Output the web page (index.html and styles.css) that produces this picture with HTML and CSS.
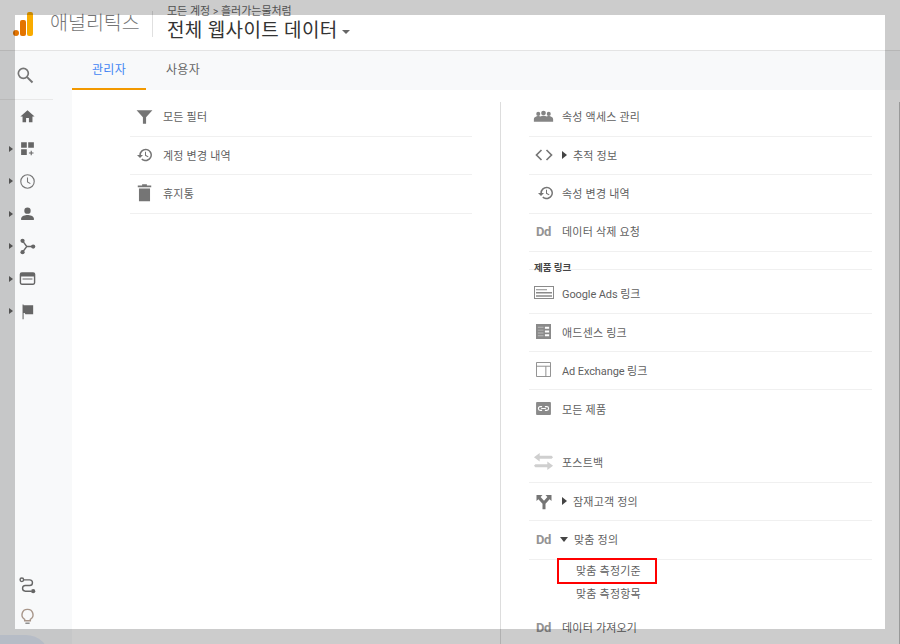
FILE: index.html
```html
<!DOCTYPE html>
<html lang="ko">
<head>
<meta charset="utf-8">
<title>애널리틱스 관리자</title>
<link rel="stylesheet" href="styles.css">
</head>
<body>
<div class="app">
  <header class="topbar">
    <svg class="logo" viewBox="0 0 24 26" width="24" height="26"><rect x="16" y="1" width="6" height="24" rx="2" fill="#f9ab00"/><rect x="9" y="9" width="6" height="16" rx="2" fill="#e37400"/><circle cx="5" cy="22" r="3" fill="#e37400"/></svg>
    <div class="brand">애널리틱스</div>
    <div class="account">
      <div class="crumb">모든 계정 <span class="chev">&gt;</span> 흘러가는물처럼</div>
      <div class="view">전체 웹사이트 데이터<span class="caret"></span></div>
    </div>
  </header>
  <div class="body">
    <nav class="sidebar">
      <div class="searchbox">
        <svg viewBox="0 0 24 24" width="20" height="20"><circle cx="10" cy="10" r="6" fill="none" stroke="#757575" stroke-width="2"/><path d="M14.500 14.500L21 21" stroke="#757575" stroke-width="2.400"/></svg>
      </div>
      <ul class="navlist">
        <li><svg viewBox="0 0 24 24" width="17" height="17"><path d="M10 20v-6h4v6h5v-8h3L12 3 2 12h3v8z" fill="#666"/></svg></li>
        <li class="exp"><svg viewBox="0 0 24 24" width="17" height="17"><path d="M3 3h8v8H3zM13 3h8v8h-8zM3 13h8v8H3zM16.500 15h1.500v2.500h2.500V19H18v2.500h-1.500V19H14v-1.500h2.500z" fill="#666"/></svg></li>
        <li class="exp"><svg viewBox="0 0 24 24" width="17" height="17"><circle cx="12" cy="12" r="9.500" fill="none" stroke="#777" stroke-width="1.600"/><path d="M12 6.500V12.500l4 2.500" fill="none" stroke="#777" stroke-width="1.500"/></svg></li>
        <li class="exp"><svg viewBox="0 0 24 24" width="17" height="17"><circle cx="12" cy="8" r="4.500" fill="#666"/><path d="M3 21v-2c0-3.500 6-5 9-5s9 1.500 9 5v2z" fill="#666"/></svg></li>
        <li class="exp"><svg viewBox="0 0 24 24" width="17" height="17"><circle cx="5" cy="4" r="3" fill="#666"/><circle cx="5" cy="20" r="3" fill="#666"/><circle cx="20" cy="12" r="3" fill="#666"/><path d="M5 4l6 8-6 8M11 12h9" fill="none" stroke="#666" stroke-width="2"/></svg></li>
        <li class="exp"><svg viewBox="0 0 24 24" width="17" height="17"><path d="M4 3h16a3 3 0 0 1 3 3v12a3 3 0 0 1-3 3H4a3 3 0 0 1-3-3V6a3 3 0 0 1 3-3zM3 9v9a1 1 0 0 0 1 1h16a1 1 0 0 0 1-1V9zM5 12h14v1.500H5z" fill="#666" fill-rule="evenodd"/></svg></li>
        <li class="exp"><svg viewBox="0 0 24 24" width="17" height="17"><path d="M5 2h1.500v1H20v13H9l-1-2H6.500v9H5z" fill="#666"/></svg></li>
      </ul>
      <div class="navfoot">
        <svg viewBox="0 0 24 24" width="17" height="17"><circle cx="4" cy="4" r="2.500" fill="none" stroke="#666" stroke-width="2"/><circle cx="20" cy="20" r="3" fill="#666"/><path d="M6.500 4H15a3.500 3.500 0 0 1 0 8H9a3.500 3.500 0 0 0 0 8h8" fill="none" stroke="#666" stroke-width="2"/></svg>
        <svg viewBox="0 0 24 24" width="17" height="17"><path d="M12 2a7.500 7.500 0 0 0-4 14v2h8v-2a7.500 7.500 0 0 0-4-14z" fill="none" stroke="#a8968a" stroke-width="2"/><path d="M9 21.500h6" stroke="#888" stroke-width="2"/></svg>
      </div>
    </nav>
    <main class="main">
      <div class="tabs">
        <div class="tab active">관리자</div>
        <div class="tab">사용자</div>
      </div>
      <div class="columns">
        <section class="col col-left">
          <div class="row"><span class="ico"><svg viewBox="0 0 24 24" width="19" height="19"><path d="M2 4h20l-8 9v8h-4v-8z" fill="#757575"/></svg></span>모든 필터</div>
          <div class="row"><span class="ico"><svg viewBox="0 0 24 24" width="16" height="16"><use href="#hist"/></svg></span>계정 변경 내역</div>
          <div class="row"><span class="ico"><svg viewBox="0 0 24 24" width="19" height="19"><path d="M3.500 3h5.500V1.500h6V3h5.500v2.500H3.500zM5 7h14v16H5z" fill="#757575"/></svg></span>휴지통</div>
        </section>
        <section class="col col-right">
          <div class="row"><span class="ico"><svg viewBox="0 0 24 24" width="21" height="21"><circle cx="6" cy="9" r="2.300" fill="#858585"/><circle cx="12" cy="8" r="2.700" fill="#858585"/><circle cx="18" cy="9" r="2.300" fill="#858585"/><path d="M1 18v-3c0-2 3-3.500 5-3.500.6 0 1.500.1 2.200.4C9.300 11.200 11 11 12 11s2.700.2 3.800.9c.7-.3 1.600-.4 2.200-.4 2 0 5 1.500 5 3.500v3z" fill="#858585"/></svg></span>속성 액세스 관리</div>
          <div class="row"><span class="ico"><svg viewBox="0 0 24 24" width="20" height="20"><path d="M9 6l-6 6 6 6M15 6l6 6-6 6" fill="none" stroke="#757575" stroke-width="2"/></svg></span><span class="tri tri-r"></span>추적 정보</div>
          <div class="row"><span class="ico shift"><svg viewBox="0 0 24 24" width="16" height="16"><use href="#hist"/></svg></span>속성 변경 내역</div>
          <div class="row"><span class="ico dd">Dd</span>데이터 삭제 요청</div>
          <h2 class="group">제품 링크</h2>
          <div class="row after-group lat"><span class="ico"><svg viewBox="0 0 20 12" width="20" height="13" preserveAspectRatio="none"><path d="M.5.500h19v11H.5z" fill="none" stroke="#8a8a8a"/><path d="M2 3h11v1H2zM2 5.500h16v1.500H2zM2 8.500h16V10H2z" fill="#8a8a8a"/></svg></span>Google Ads 링크</div>
          <div class="row"><span class="ico"><svg viewBox="0 0 16 16" width="15" height="15"><path d="M0 0h16v16H0z" fill="#8a8a8a"/><path d="M9.500 3H14v2H9.500zM9.500 7H14v2H9.500zM9.500 11H14v2H9.500z" fill="#fff"/><path d="M2 3h6v1H2zM2 6h6v1H2zM2 9h6v1H2zM2 12h6v1H2z" fill="#bbb"/></svg></span>애드센스 링크</div>
          <div class="row lat"><span class="ico"><svg viewBox="0 0 16 16" width="15" height="15"><path d="M.5.500h15v15H.500zM.5 4.500h15M10.500 4.500v11" fill="none" stroke="#8a8a8a"/></svg></span>Ad Exchange 링크</div>
          <div class="row no-line"><span class="ico"><svg viewBox="0 0 16 14" width="15" height="13"><rect width="16" height="14" rx="1" fill="#8a8a8a"/><path d="M6.500 5H4.500a2 2 0 0 0 0 4h2M9.500 5h2a2 2 0 0 1 0 4h-2M5.500 7h5" fill="none" stroke="#fff" stroke-width="1.200"/></svg></span>모든 제품</div>
          <div class="row gap-top"><span class="ico"><svg viewBox="0 0 22 22" width="21" height="21"><path d="M7 2L1 6.500 7 11V8h12.500l1.500-1.500L19.500 5H7zM15 11v3H2.500L1 15.500 2.500 17H15v3l6-4.500z" fill="#cfcfcf"/></svg></span>포스트백</div>
          <div class="row"><span class="ico"><svg viewBox="0 0 24 24" width="18" height="18"><path d="M2 4h8L7.500 6.500l4.500 5 4.500-5L14 4h8v8l-2.500-2.500-5.500 6V23h-4v-7.500l-5.500-6L2 12z" fill="#757575"/></svg></span><span class="tri tri-r"></span>잠재고객 정의</div>
          <div class="row"><span class="ico dd">Dd</span><span class="tri tri-d"></span>맞춤 정의</div>
          <div class="sub-wrap">
            <div class="sub highlighted">맞춤 측정기준</div>
            <div class="sub">맞춤 측정항목</div>
          </div>
          <div class="row plain"><span class="ico dd">Dd</span>데이터 가져오기</div>
        </section>
        <div class="edge"></div>
      </div>
    </main>
  </div>
</div>
<svg class="defs" width="0" height="0"><defs><g id="hist"><path d="M13 2.500A9.500 9.500 0 0 0 3.500 12H0l4.500 4.500L9 12H5.800A7.200 7.200 0 1 1 8 17.200l-1.600 1.700A9.500 9.500 0 1 0 13 2.500z" fill="#757575"/><path d="M12 7v6l4.500 2.500.8-1.300-3.800-2.200V7z" fill="#757575"/></g></defs></svg>
<div class="hump"></div>
<div class="spotlight"></div>
</body>
</html>
```
FILE: styles.css
```css
* { box-sizing: border-box; }
html, body { margin: 0; height: 100%; overflow: hidden; }
body { font-family: Roboto, "Noto Sans CJK KR", sans-serif; background: #fff; color: #5f5f5f; }
.defs { display: block; height: 0; }
.app { height: 644px; display: flex; flex-direction: column; }
.topbar { height: 51px; flex: none; display: flex; align-items: flex-start; border-bottom: 1px solid #e4e4e4; background: #fff; padding-left: 11px; }
.logo { margin-top: 11px; }
.brand { margin-left: 15px; margin-top: 11px; width: 103px; height: 26px; line-height: 26px; font-size: 19.500px; font-weight: 300; color: #757575; border-right: 1px solid #e0e0e0; white-space: nowrap; }
.account { margin-left: 14px; margin-top: 5px; }
.crumb { font-size: 11px; line-height: 14px; color: #666; white-space: nowrap; }
.chev { font-size: 10px; }
.view { font-size: 19px; line-height: 24px; letter-spacing: .35px; color: #333; white-space: nowrap; }
.caret { display: inline-block; vertical-align: middle; border: 4px solid transparent; border-top-color: #666; border-bottom: 0; margin-left: 4px; }
.body { flex: 1; display: flex; min-height: 0; }
.sidebar { width: 72px; flex: none; background: #f8f9fa; display: flex; flex-direction: column; }
.searchbox { height: 49px; width: 53px; padding: 14px 0 0 15px; border-bottom: 1px solid #e8e8e8; }
.navlist { list-style: none; margin: 0; padding: 0; }
.navlist li { height: 32.500px; display: flex; align-items: center; padding-left: 18.500px; position: relative; }
.exp::before { content: ""; position: absolute; left: 9px; top: 50%; margin-top: -3px; border: 3px solid transparent; border-left: 4px solid #666; border-right: 0; }
.navfoot { margin-top: auto; display: flex; flex-direction: column; gap: 14px; padding: 0 0 19px 18.500px; }
.main { flex: 1; min-width: 0; display: flex; flex-direction: column; }
.tabs { height: 39px; flex: none; background: #f8f9fa; display: flex; }
.tab { width: 74px; height: 39px; line-height: 39px; text-align: center; font-size: 12px; letter-spacing: .3px; color: #666; }
.tab.active { color: #4285f4; border-bottom: 2px solid #f29900; }
.columns { flex: 1; display: flex; min-height: 0; padding-top: 12px; }
.col-left { width: 342px; margin-left: 58px; }
.col-right { width: 372px; margin-left: 28px; padding-left: 28px; border-left: 1px solid #ddd; }
.edge { margin-left: auto; width: 1px; background: #c0c0c0; }
.row { height: 38.300px; display: flex; align-items: center; font-size: 11px; letter-spacing: .2px; color: #5f5f5f; border-bottom: 1px solid #f0f0f0; white-space: nowrap; padding-bottom: 2px; }
.row:first-child { height: 35px; padding-bottom: 6px; }
.row.lat { letter-spacing: -.1px; }
.row.after-group { height: 44px; padding-top: 6px; padding-bottom: 3px; }
.row.no-line { border-bottom: 0; }
.row.plain { border-bottom: 0; margin-top: 4px; padding-bottom: 3px; }
.row.gap-top { margin-top: 16px; padding-bottom: 3px; }
.ico { width: 33px; flex: none; display: flex; justify-content: center; align-items: center; padding-right: 4px; }
.ico.shift { padding-right: 0; padding-left: 1px; }
.dd { font-weight: 700; font-size: 13px; letter-spacing: -.3px; color: #949494; }
.tri { display: inline-block; margin-right: 6px; border: 4px solid transparent; }
.tri-r { border-left: 5px solid #444; border-right: 0; }
.tri-d { border-top: 5px solid #444; border-bottom: 0; margin-left: -2px; }
.group { margin: 0; height: 18px; line-height: 32px; padding-left: 5px; font-size: 9.500px; font-weight: 700; color: #444; border-bottom: 1px solid #f0f0f0; }
.sub { height: 23px; line-height: 24px; padding-left: 47px; font-size: 11px; letter-spacing: .2px; color: #5f5f5f; }
.sub.highlighted { position: relative; }
.sub.highlighted::after { content: ""; position: absolute; box-sizing: border-box; left: 28px; top: -2px; width: 100px; height: 26px; border: 2px solid #f00; }
.hump { position: fixed; left: 0; top: 635px; width: 50px; height: 40px; background: #e4ebf8; border-top-right-radius: 24px; }
.spotlight { position: fixed; left: 15px; top: 15px; width: 870px; height: 614px; box-shadow: 0 0 0 1000px rgba(0,0,0,.2); pointer-events: none; }
```
